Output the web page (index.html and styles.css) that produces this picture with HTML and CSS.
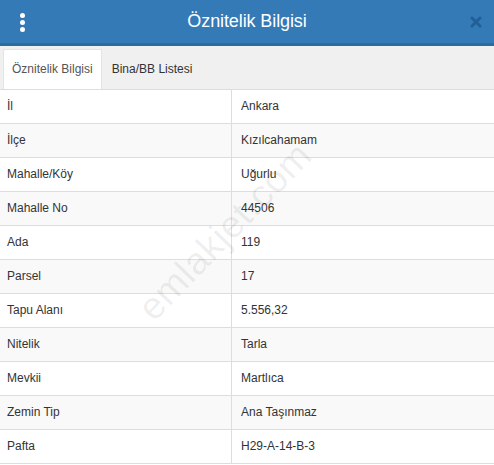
FILE: index.html
```html
<!DOCTYPE html>
<html lang="tr">
<head>
<meta charset="utf-8">
<link rel="stylesheet" href="styles.css">
</head>
<body>
<div class="dialog">
  <header class="head">
    <span class="kebab"><i></i><i></i><i></i></span>
    <h1 class="title">Öznitelik Bilgisi</h1>
    <span class="close">
      <svg width="12" height="12" viewBox="0 0 12 12"><path d="M2 2L10 10M10 2L2 10" stroke="#215f96" stroke-width="3" stroke-linecap="round"/></svg>
    </span>
  </header>
  <nav class="tabs">
    <span class="tab active">Öznitelik Bilgisi</span>
    <span class="tab">Bina/BB Listesi</span>
  </nav>
  <div class="body">
    <table class="grid">
      <tr><td>İl</td><td>Ankara</td></tr>
      <tr><td>İlçe</td><td>Kızılcahamam</td></tr>
      <tr><td>Mahalle/Köy</td><td>Uğurlu</td></tr>
      <tr><td>Mahalle No</td><td>44506</td></tr>
      <tr><td>Ada</td><td>119</td></tr>
      <tr><td>Parsel</td><td>17</td></tr>
      <tr><td>Tapu Alanı</td><td>5.556,32</td></tr>
      <tr><td>Nitelik</td><td>Tarla</td></tr>
      <tr><td>Mevkii</td><td>Martlıca</td></tr>
      <tr><td>Zemin Tip</td><td>Ana Taşınmaz</td></tr>
      <tr><td>Pafta</td><td>H29-A-14-B-3</td></tr>
    </table>
    <div class="watermark">emlakjet.com</div>
  </div>
</div>
</body>
</html>
```
FILE: styles.css
```css
html, body {
  margin: 0;
  padding: 0;
  background: #fff;
  overflow: hidden;
}
.dialog {
  width: 494px;
  height: 465px;
  font-family: "Liberation Sans", Arial, sans-serif;
  color: #333;
  overflow: hidden;
}
.head {
  height: 43px;
  background: #337ab7;
  border-bottom: 3px solid #2d6aa0;
  display: flex;
  align-items: center;
  justify-content: center;
  position: relative;
}
.kebab {
  position: absolute;
  left: 20px;
  top: 13px;
  display: flex;
  flex-direction: column;
  gap: 2px;
}
.kebab i {
  display: block;
  width: 5px;
  height: 5px;
  border-radius: 50%;
  background: #fff;
}
.title {
  margin: 0;
  font-size: 18px;
  font-weight: normal;
  color: #fff;
  letter-spacing: -0.1px;
}
.close {
  position: absolute;
  right: 12px;
  top: 16px;
  display: flex;
}
.tabs {
  height: 43px;
  background: #f0f0f0;
  border-bottom: 1px solid #ddd;
  display: flex;
  align-items: flex-end;
  padding-left: 3px;
}
.tab {
  font-size: 12px;
  height: 39px;
  line-height: 39px;
  padding: 0 9px 0 10px;
}
.tab.active {
  background: #fff;
  border: 1px solid #e4e4e4;
  border-bottom: none;
  height: 39px;
  line-height: 39px;
  padding: 0 8px 0 8px;
  color: #555;
}
.body {
  position: relative;
}
.grid {
  width: 100%;
  border-collapse: collapse;
  font-size: 12px;
}
.grid td {
  padding: 8px 7px;
  height: 17px;
  line-height: 17px;
  border-bottom: 1px solid #ddd;
  vertical-align: middle;
}
.grid td:first-child {
  width: 217px;
  border-right: 1px solid #ddd;
}
.grid td:last-child {
  padding-left: 9px;
}
.grid tr:nth-child(even) td {
  background: #f9f9f9;
}
.watermark {
  position: absolute;
  left: 110px;
  top: 120px;
  font-size: 38px;
  color: rgba(0, 0, 0, 0.07);
  transform: rotate(-46deg);
  transform-origin: center;
  white-space: nowrap;
  pointer-events: none;
  letter-spacing: 0.5px;
}
```
